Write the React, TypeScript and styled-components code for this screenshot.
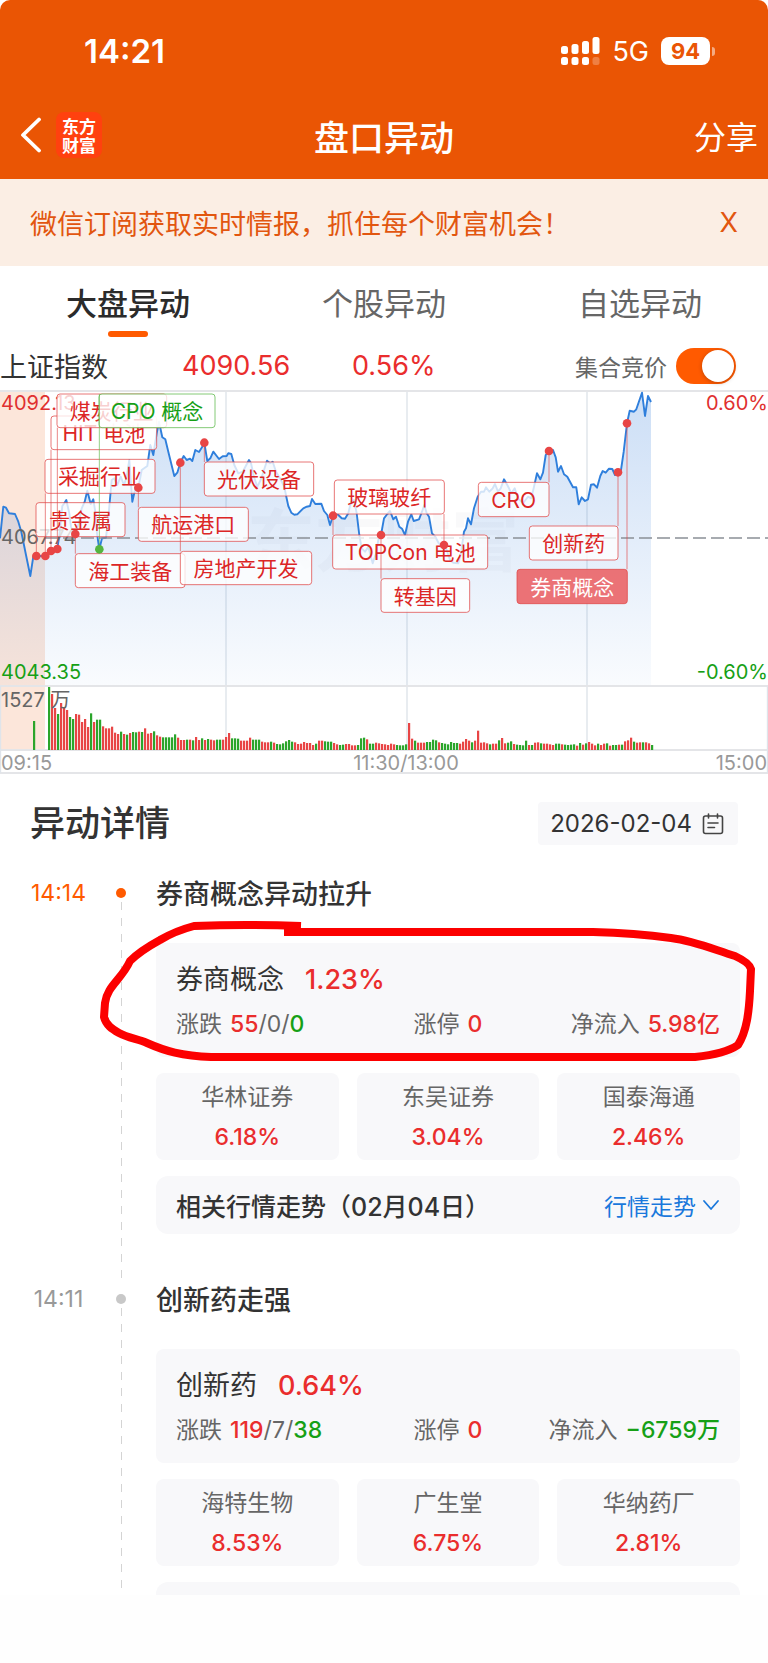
import React, { useState } from "react";
import styled, { createGlobalStyle } from "styled-components";

const RED = "#ea2d2d";
const GREEN = "#16a016";
const BRAND = "#ea5504";
const ACCENT = "#ff5a00";

const GlobalStyle = createGlobalStyle`
  * { box-sizing: border-box; }
  body {
    margin: 0;
    background: #fff;
    color: #333;
    font-family: Inter, "Noto Sans CJK SC", sans-serif;
  }
  button {
    padding: 0;
    border: 0;
    background: none;
    color: inherit;
    font: inherit;
    cursor: pointer;
  }
  h1, h2, h3, p { margin: 0; }
`;

const Screen = styled.div`
  display: flex;
  flex-direction: column;
  height: 100vh;
`;

const Scroller = styled.main`
  flex: 1;
  min-height: 0;
  overflow-x: hidden;
  overflow-y: auto;
  scrollbar-width: none;
`;

const HomeArea = styled.div`
  flex: none;
  height: 68px;
  background: #fefefe;
`;

/* ---------- header ---------- */

const Header = styled.header`
  flex: none;
  padding-bottom: 9px;
  border-radius: 10px 10px 0 0;
  background: ${BRAND};
  color: #fff;
`;

const StatusBar = styled.div`
  display: flex;
  align-items: center;
  justify-content: space-between;
  height: 102px;
  padding: 0 53px 0 84px;
`;

const Clock = styled.span`
  font-size: 33px;
  font-weight: 600;
`;

const StatusIcons = styled.div`
  display: flex;
  align-items: center;
  gap: 12px;
  font-size: 27px;
`;

const Battery = styled.span`
  display: flex;
  align-items: center;
  gap: 2px;
  &::after {
    content: "";
    width: 3px;
    height: 9px;
    border-radius: 0 3px 3px 0;
    background: rgba(255, 255, 255, 0.5);
  }
`;

const BatteryLevel = styled.span`
  width: 49px;
  height: 28px;
  border-radius: 8px;
  background: #fff;
  color: ${BRAND};
  font-size: 22px;
  font-weight: 700;
  line-height: 28px;
  text-align: center;
`;

const NavBar = styled.nav`
  display: grid;
  grid-template-columns: 1fr auto 1fr;
  align-items: center;
  height: 66px;
  padding: 0 10px;
  margin-bottom: 2px;
`;

const NavLeft = styled.div`
  display: flex;
  align-items: center;
  gap: 14px;
  padding-left: 10px;
`;

const BackButton = styled.button`
  display: flex;
`;

const Logo = styled.span`
  width: 46px;
  height: 46px;
  padding-top: 4px;
  border-radius: 8px;
  background: #ff410f;
  font-family: "Noto Sans CJK SC", sans-serif;
  font-size: 17px;
  font-weight: 700;
  line-height: 19px;
  text-align: center;
`;

const NavTitle = styled.h1`
  font-size: 35px;
  font-weight: 500;
`;

const ShareButton = styled.button`
  justify-self: end;
  font-size: 32px;
`;

const Notice = styled.div`
  display: flex;
  align-items: center;
  justify-content: space-between;
  height: 87px;
  padding: 0 30px;
  background: #fbeee4;
  color: #e2560f;
  font-size: 27px;
`;

/* ---------- tabs and index ---------- */

const Tabs = styled.div`
  display: grid;
  grid-template-columns: repeat(3, 1fr);
`;

const Tab = styled.button<{ $active: boolean }>`
  display: flex;
  flex-direction: column;
  align-items: center;
  gap: 7px;
  padding-top: 18px;
  color: ${(p) => (p.$active ? "#2b2b2b" : "#666")};
  font-size: 31px;
  font-weight: ${(p) => (p.$active ? 500 : 400)};
  line-height: 40px;
  &::after {
    content: "";
    width: 40px;
    height: 6px;
    border-radius: 3px;
    background: ${(p) => (p.$active ? ACCENT : "transparent")};
  }
`;

const IndexRow = styled.div`
  display: grid;
  grid-template-columns: 182px 170px 1fr auto;
  align-items: center;
  height: 53px;
  padding: 4px 32px 0 0;
  font-size: 27px;
`;

const IndexValue = styled.span`
  color: ${RED};
`;

const AuctionLabel = styled.label`
  display: flex;
  align-items: center;
  gap: 9px;
  color: #666;
  font-size: 23px;
`;

const Switch = styled.input`
  appearance: none;
  width: 60px;
  height: 36px;
  margin: 0;
  padding: 2px;
  border-radius: 18px;
  background: #ccc;
  cursor: pointer;
  &::before {
    content: "";
    display: block;
    width: 32px;
    height: 32px;
    border-radius: 50%;
    background: #fff;
    box-shadow: 0 1px 4px rgba(0, 0, 0, 0.25);
  }
  &:checked { background: ${ACCENT}; }
  &:checked::before { margin-left: auto; }
`;

const ChartSvg = styled.svg`
  display: block;
  width: 100%;
  height: auto;
  font-family: Inter, "Noto Sans CJK SC", sans-serif;
`;

/* ---------- details ---------- */

const DetailHead = styled.div`
  display: flex;
  align-items: center;
  justify-content: space-between;
  padding: 28px 30px 30px;
`;

const DetailTitle = styled.h2`
  font-size: 35px;
  font-weight: 500;
  line-height: 43px;
`;

const DateButton = styled.button`
  display: flex;
  align-items: center;
  gap: 10px;
  height: 43px;
  padding: 0 14px 0 12px;
  border-radius: 4px;
  background: #f8f8fa;
  font-size: 24px;
`;

const Event = styled.section`
  display: grid;
  grid-template-columns: 85px 10px 1fr;
  padding: 0 28px 0 31px;
`;

const EventTime = styled.time<{ $active: boolean }>`
  width: 55px;
  color: ${(p) => (p.$active ? ACCENT : "#999")};
  font-size: 23px;
  line-height: 36px;
  text-align: center;
`;

const Rail = styled.div<{ $active: boolean }>`
  display: flex;
  flex-direction: column;
  align-items: center;
  gap: 4px;
  padding-top: 13px;
  &::before {
    content: "";
    width: 10px;
    height: 10px;
    border-radius: 50%;
    background: ${(p) => (p.$active ? ACCENT : "#c8c8c8")};
  }
  &::after {
    content: "";
    flex: 1;
    width: 1px;
    background: repeating-linear-gradient(#d4d4d4 0 8px, transparent 8px 16px);
  }
`;

const EventBody = styled.div`
  display: flex;
  flex-direction: column;
  gap: 16px;
  min-width: 0;
  padding: 0 0 47px 30px;
`;

const EventTitle = styled.h3`
  margin-bottom: 12px;
  font-size: 27px;
  font-weight: 500;
  line-height: 40px;
`;

const SectorCard = styled.div`
  position: relative;
  display: flex;
  flex-direction: column;
  gap: 10px;
  padding: 19px 20px 17px;
  border-radius: 8px;
  background: #f8f8fa;
`;

const SectorName = styled.div`
  display: flex;
  gap: 21px;
  font-size: 27px;
  line-height: 36px;
`;

const Figure = styled.span<{ $tone?: string }>`
  color: ${(p) => p.$tone || "inherit"};
  font-weight: ${(p) => (p.$tone ? 500 : 400)};
`;

const SectorStats = styled.div`
  display: grid;
  grid-template-columns: 1fr auto 1fr;
  color: #666;
  font-size: 23px;
  line-height: 32px;
  white-space: nowrap;
`;

const Stat = styled.div`
  display: flex;
  gap: 8px;
  &:last-child { justify-content: flex-end; }
`;

const StockGrid = styled.div`
  display: grid;
  grid-template-columns: repeat(3, 1fr);
  gap: 18px;
`;

const StockCard = styled.div`
  display: flex;
  flex-direction: column;
  align-items: center;
  gap: 8px;
  padding: 8px 0 7px;
  border-radius: 8px;
  background: #f8f8fa;
  color: #666;
  font-size: 23px;
  line-height: 32px;
`;

const TrendRow = styled.div`
  display: flex;
  align-items: center;
  justify-content: space-between;
  height: 58px;
  padding: 0 20px;
  border-radius: 12px;
  background: #f8f8fa;
  font-size: 25px;
  font-weight: 500;
`;

const TrendButton = styled.button`
  display: flex;
  align-items: center;
  gap: 6px;
  color: #1a78dc;
  font-size: 23px;
  font-weight: 400;
`;

const MarkerStroke = styled.svg`
  position: absolute;
  top: -25px;
  left: -56px;
  width: calc(100% + 72px);
  height: 146px;
  pointer-events: none;
`;

/* ---------- chart data, on a grid of three units per pixel ---------- */

const PRICE_RUNS: { start: number; points: string }[] = [
  {
    start: 0,
    points:
      "0,475 10,380 18,383 27,400 45,402 55,425 64,455 78,525 91,588 100,530 109,528 136,528 153,513 172,507 180,450 187,378 193,370 199,360 208,400 213,440 220,462 226,462 236,430 245,385 254,365 262,332 272,372 280,358 286,395 291,460 298,508 306,475 318,473 326,400 335,300 343,295 352,315 362,290 372,315 380,290 388,240 397,365 407,320 415,323 425,270 442,258 451,195 460,225 470,160 477,125 487,172 496,178 505,215 523,288 532,278 541,248 551,228 560,240 570,236 577,243 586,210 597,216 606,202 613,188 622,243 631,235 640,215 657,237 668,229 680,228 685,220 694,222 703,255 715,280 728,275 747,240",
  },
  {
    start: 750,
    points:
      "3,250 12,290 22,320 32,300 42,270 51,242 60,250 68,245 78,275 90,295 103,320 109,350 115,378 124,398 133,404 142,403 160,385 170,380 180,378 186,357 196,372 214,371 222,393 232,405 240,435 249,407 262,402 275,415 285,416 295,400 303,365 312,360 320,400 328,465 335,505 345,515 355,500 368,550 378,520 385,480 393,465 402,415 412,402 420,393 430,418 438,410 448,440 456,446 465,465 474,425 484,403 491,423 507,418 516,395 523,375 530,400 537,410 546,460 556,470 566,490 582,495 590,510 600,540 610,548 625,550 633,520 642,455 648,445 654,415 663,433 672,385 683,350 693,335 702,335 708,322 718,335 728,325 735,312 744,335 752,325 762,298 772,315",
  },
  {
    start: 1524,
    points:
      "3,325 10,340 20,325 30,355 45,370 60,350 70,355 78,320 87,280 97,298 105,278 113,225 123,213 135,210 143,232 150,275 159,258 168,283 178,290 195,322 205,322 212,373 221,352 231,363 240,358 249,314 258,313 267,323 277,288 284,273 293,278 303,266 313,267 321,285 330,277 339,270 347,215 357,130 365,92 378,95 385,88 402,38 411,108 420,48 429,66",
  },
];

const toX = (v: number) => v / 3;
const toY = (v: number) => v / 3 - 10;

const linePoints = PRICE_RUNS.flatMap((run) =>
  run.points.split(" ").map((pair) => {
    const [x, y] = pair.split(",").map(Number);
    return `${toX(x + run.start).toFixed(1)},${toY(y).toFixed(1)}`;
  })
).join(" ");

/* one entry per minute bar: colour letter, then height */
const VOLUMES =
  "g189 r168 r126 g108 r141 r129 r120 g99 g93 r108 r106 r84 r93 r69 g110 r84 g91 g91 r71 r65 r65 r70 r52 r48 g55 r48 g46 r51 g54 g53 r55 g54 r65 r49 r51 g56 r44 r40 g38 g38 g38 g38 g47 r37 r30 r30 g31 r31 g29 r39 r30 g35 r30 g33 r31 r29 g31 g31 r31 r39 r51 g35 g35 g34 r28 r28 r28 r37 g31 g31 g31 r25 r23 r23 g25 r22 g18 g17 g20 g26 g30 g25 r23 r18 r19 r24 r21 r21 r15 g19 r28 r28 g26 g25 g25 r21 r17 g15 g16 r18 r18 r14 r14 g15 g35 g37 r32 g19 g19 r22 r20 r18 r17 r15 r19 r17 g15 g14 g14 g17 r81 r34 g28 r22 r22 r22 g24 g24 g31 g29 r23 g21 g19 g17 g24 g21 g21 r19 r25 r33 r28 g23 r28 r58 r22 r23 r20 g17 r19 r19 g29 r36 r20 g22 g26 r18 g16 g15 g14 g28 r15 g15 r22 r23 g20 r19 r19 r17 r15 g19 g19 r17 g16 g15 g16 g17 r13 g21 r16 g20 r24 r19 r14 g19 r15 r19 g20 r13 g15 g15 r16 g16 r26 r29 r37 g25 r22 r23 g23 r23 r20 g15"
    .split(" ")
    .map((v) => ({ up: v[0] === "r", h: Number(v.slice(1)) / 3 }));

type Tone = "red" | "green" | "solid";
interface Flag {
  text: string;
  box: [number, number, number, number];
  dot: [number, number];
  tone?: Tone;
}

/* box: left, top, right, bottom */
const FLAGS: Flag[] = [
  { text: "贵金属", box: [108, 368, 375, 470], dot: [109, 528] },
  { text: "采掘行业", box: [135, 238, 465, 340], dot: [136, 528] },
  { text: "HIT 电池", box: [153, 108, 470, 209], dot: [153, 513] },
  { text: "煤炭行业", box: [171, 42, 500, 143], dot: [172, 507] },
  { text: "海工装备", box: [226, 521, 555, 623], dot: [226, 462] },
  { text: "CPO 概念", box: [297, 42, 645, 143], dot: [298, 508], tone: "green" },
  { text: "航运港口", box: [415, 382, 745, 484], dot: [415, 323] },
  { text: "房地产开发", box: [541, 514, 935, 614], dot: [541, 248] },
  { text: "光伏设备", box: [613, 246, 941, 348], dot: [613, 188] },
  { text: "TOPCon 电池", box: [998, 465, 1463, 567], dot: [999, 407] },
  { text: "转基因", box: [1143, 596, 1409, 697], dot: [1143, 465] },
  { text: "玻璃玻纤", box: [1003, 300, 1333, 402], dot: [1332, 495] },
  { text: "CRO", box: [1435, 307, 1647, 410], dot: [1647, 213] },
  { text: "创新药", box: [1588, 438, 1854, 540], dot: [1854, 277] },
  { text: "券商概念", box: [1551, 568, 1882, 671], dot: [1881, 130], tone: "solid" },
];

function FlagMark({ flag }: { flag: Flag }) {
  const [l, t, r, b] = flag.box;
  const green = flag.tone === "green";
  const solid = flag.tone === "solid";
  const stroke = green ? "#5bb84a" : "#e04848";
  return (
    <g>
      <rect
        x={toX(l)}
        y={toY(t)}
        width={(r - l) / 3}
        height={(b - t) / 3}
        rx="3"
        fill={solid ? "#ea6c70" : "#fff"}
        fillOpacity={solid ? 0.96 : 0.78}
        stroke={stroke}
        strokeOpacity="0.75"
      />
      <line
        x1={toX(flag.dot[0])}
        x2={toX(flag.dot[0])}
        y1={toY(flag.dot[1] < t || green ? t : b)}
        y2={toY(flag.dot[1])}
        stroke={stroke}
        strokeOpacity="0.65"
      />
      <text
        x={toX((l + r) / 2)}
        y={toY((t + b) / 2) + 8}
        fontSize="21"
        textAnchor="middle"
        fill={solid ? "#fff" : green ? GREEN : "#dc2626"}
      >
        {flag.text}
      </text>
    </g>
  );
}

function MarketChart() {
  return (
    <ChartSvg viewBox="0 0 768 384" role="img" aria-label="上证指数分时走势">
      <defs>
        <linearGradient id="area" x1="0" y1="0" x2="0" y2="1">
          <stop offset="0" stopColor="#3c82dc" stopOpacity="0.26" />
          <stop offset="1" stopColor="#3c82dc" stopOpacity="0.03" />
        </linearGradient>
      </defs>
      <rect x="0" y="1" width="45" height="359" fill="#fce6da" />
      <g stroke="#dfe4ea" strokeWidth="1.4" fill="none">
        <path d="M226 1V360M407 1V360M587 1V360" />
        <path d="M0 1H768M0 296H768M0 360H768M0 383H768" stroke="#e4e5e8" strokeWidth="2" />
        <path d="M0.5 296V383M767.5 296V383" />
      </g>
      <text x="247" y="176" fontSize="68" fontWeight="700" fill="#60708a" fillOpacity="0.04">
        东方财富
      </text>
      <polygon points={`0,295 ${linePoints} 651,295`} fill="url(#area)" />
      <polyline
        points={linePoints}
        fill="none"
        stroke="#2f7fdc"
        strokeWidth="1.9"
        strokeLinejoin="round"
      />
      <line x1="45" x2="768" y1="148" y2="148" stroke="#8b9097" strokeWidth="1.6" strokeDasharray="13 5" />
      {VOLUMES.map((bar, i) => (
        <rect
          key={i}
          x={48 + i * 3}
          y={360 - bar.h}
          width="2.2"
          height={bar.h}
          fill={bar.up ? "#e84545" : "#2ba52b"}
        />
      ))}
      <rect x="33" y="331" width="2.2" height="29" fill="#2ba52b" />
      <g fontSize="20">
        <text x="1" y="20" fill="#e03030">4092.13</text>
        <text x="1" y="154" fill="#666">4067.74</text>
        <text x="1" y="289" fill={GREEN}>4043.35</text>
        <text x="768" y="20" textAnchor="end" fill="#e03030">0.60%</text>
        <text x="768" y="289" textAnchor="end" fill={GREEN}>-0.60%</text>
        <text x="1" y="317" fill="#666">1527 万</text>
        <text x="1" y="380" fill="#999">09:15</text>
        <text x="406" y="380" textAnchor="middle" fill="#999">11:30/13:00</text>
        <text x="767" y="380" textAnchor="end" fill="#999">15:00</text>
      </g>
      {FLAGS.map((flag) => (
        <FlagMark key={flag.text} flag={flag} />
      ))}
      {FLAGS.map((flag) => (
        <circle
          key={flag.text}
          cx={toX(flag.dot[0])}
          cy={toY(flag.dot[1])}
          r="4.3"
          fill={flag.tone === "green" ? "#55b53f" : "#e84545"}
        />
      ))}
    </ChartSvg>
  );
}

/* ---------- events ---------- */

interface MarketEvent {
  time: string;
  title: string;
  sector: string;
  change: string;
  counts: [string, string, string];
  limitUp: string;
  inflow: string;
  inflowTone: string;
  stocks: [string, string][];
  trend?: string;
  circled?: boolean;
}

const EVENTS: MarketEvent[] = [
  {
    time: "14:14",
    title: "券商概念异动拉升",
    sector: "券商概念",
    change: "1.23%",
    counts: ["55", "0", "0"],
    limitUp: "0",
    inflow: "5.98亿",
    inflowTone: RED,
    stocks: [["华林证券", "6.18%"], ["东吴证券", "3.04%"], ["国泰海通", "2.46%"]],
    trend: "相关行情走势（02月04日）",
    circled: true,
  },
  {
    time: "14:11",
    title: "创新药走强",
    sector: "创新药",
    change: "0.64%",
    counts: ["119", "7", "38"],
    limitUp: "0",
    inflow: "−6759万",
    inflowTone: GREEN,
    stocks: [["海特生物", "8.53%"], ["广生堂", "6.75%"], ["华纳药厂", "2.81%"]],
  },
];

function EventItem({ event, active }: { event: MarketEvent; active: boolean }) {
  return (
    <Event>
      <EventTime $active={active}>{event.time}</EventTime>
      <Rail $active={active} />
      <EventBody>
        <EventTitle>{event.title}</EventTitle>
        <SectorCard>
          <SectorName>
            <span>{event.sector}</span>
            <Figure $tone={RED}>{event.change}</Figure>
          </SectorName>
          <SectorStats>
            <Stat>
              <span>涨跌</span>
              <span>
                <Figure $tone={RED}>{event.counts[0]}</Figure>/{event.counts[1]}/
                <Figure $tone={GREEN}>{event.counts[2]}</Figure>
              </span>
            </Stat>
            <Stat>
              <span>涨停</span>
              <Figure $tone={RED}>{event.limitUp}</Figure>
            </Stat>
            <Stat>
              <span>净流入</span>
              <Figure $tone={event.inflowTone}>{event.inflow}</Figure>
            </Stat>
          </SectorStats>
          {event.circled && (
            <MarkerStroke viewBox="100 917 656 146" preserveAspectRatio="none" aria-hidden="true">
              <path
                d="M301 925 Q245 923 194 925 Q175 930 160 939 Q140 950 130 960 C122 978 107 985 105 1002 L104 1016 C106 1024 112 1028 119 1032 C128 1037 138 1038 147 1042 C165 1050 182 1055 211 1056 H695 Q725 1053 738 1044 C747 1030 749 1010 750 990 L751 968 Q750 962 735 955 C715 949 695 940 671 937 Q635 932 593 931 H284"
                fill="none"
                stroke="#fc0000"
                strokeWidth="8"
                strokeLinejoin="round"
              />
            </MarkerStroke>
          )}
        </SectorCard>
        <StockGrid>
          {event.stocks.map(([name, change]) => (
            <StockCard key={name}>
              <span>{name}</span>
              <Figure $tone={RED}>{change}</Figure>
            </StockCard>
          ))}
        </StockGrid>
        <TrendRow>
          {event.trend && (
            <>
              <span>{event.trend}</span>
              <TrendButton type="button">
                行情走势
                <svg width="18" height="12" viewBox="0 0 18 12" fill="none" aria-hidden="true">
                  <path d="M2 2L9 10L16 2" stroke="currentColor" strokeWidth="1.8" strokeLinecap="round" strokeLinejoin="round" />
                </svg>
              </TrendButton>
            </>
          )}
        </TrendRow>
      </EventBody>
    </Event>
  );
}

const TABS = ["大盘异动", "个股异动", "自选异动"];

export default function App() {
  const [tab, setTab] = useState(0);
  const [noticeOpen, setNoticeOpen] = useState(true);

  return (
    <Screen>
      <GlobalStyle />
      <Header>
        <StatusBar>
          <Clock>14:21</Clock>
          <StatusIcons>
            <svg width="39" height="28" viewBox="0 0 39 28" fill="#fff" aria-hidden="true">
              <rect x="0" y="9" width="7" height="8" rx="2.5" />
              <rect x="10.5" y="7" width="7" height="10" rx="2.5" />
              <rect x="21" y="4" width="7" height="13" rx="2.5" />
              <rect x="31.5" y="0" width="7" height="17" rx="2.5" />
              <rect x="0" y="20" width="7" height="8" rx="2.5" />
              <rect x="10.5" y="20" width="7" height="8" rx="2.5" />
              <rect x="21" y="20" width="7" height="8" rx="2.5" />
              <rect x="31.5" y="20" width="7" height="8" rx="2.5" opacity="0.25" />
            </svg>
            <span>5G</span>
            <Battery>
              <BatteryLevel>94</BatteryLevel>
            </Battery>
          </StatusIcons>
        </StatusBar>
        <NavBar>
          <NavLeft>
            <BackButton type="button" aria-label="返回">
              <svg width="22" height="36" viewBox="0 0 22 36" fill="none" aria-hidden="true">
                <path d="M19 2.5L3 18L19 33.5" stroke="#fff" strokeWidth="3.8" strokeLinecap="round" strokeLinejoin="round" />
              </svg>
            </BackButton>
            <Logo>
              东方
              <br />
              财富
            </Logo>
          </NavLeft>
          <NavTitle>盘口异动</NavTitle>
          <ShareButton type="button">分享</ShareButton>
        </NavBar>
      </Header>
      <Scroller>
        {noticeOpen && (
          <Notice>
            <p>微信订阅获取实时情报，抓住每个财富机会！</p>
            <button type="button" onClick={() => setNoticeOpen(false)}>X</button>
          </Notice>
        )}
        <Tabs role="tablist">
          {TABS.map((name, i) => (
            <Tab key={name} type="button" role="tab" aria-selected={i === tab} $active={i === tab} onClick={() => setTab(i)}>
              {name}
            </Tab>
          ))}
        </Tabs>
        <IndexRow>
          <span>上证指数</span>
          <IndexValue>4090.56</IndexValue>
          <IndexValue>0.56%</IndexValue>
          <AuctionLabel>
            集合竞价
            <Switch type="checkbox" role="switch" defaultChecked />
          </AuctionLabel>
        </IndexRow>
        <MarketChart />
        <DetailHead>
          <DetailTitle>异动详情</DetailTitle>
          <DateButton type="button">
            2026-02-04
            <svg width="22" height="22" viewBox="0 0 22 22" fill="none" stroke="#444" strokeWidth="1.6" strokeLinecap="round" aria-hidden="true">
              <rect x="1.5" y="3" width="19" height="17.5" rx="2" />
              <path d="M6.5 1V5M15.5 1V5M6 10H16M6 14.5H12.5" />
            </svg>
          </DateButton>
        </DetailHead>
        {EVENTS.map((event, i) => (
          <EventItem key={event.time} event={event} active={i === 0} />
        ))}
      </Scroller>
      <HomeArea />
    </Screen>
  );
}
